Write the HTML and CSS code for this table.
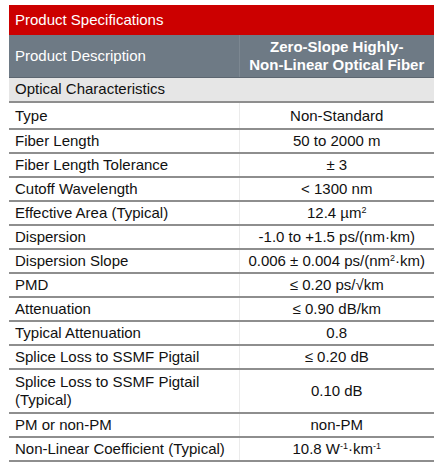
FILE: index.html
```html
<!DOCTYPE html>
<html lang="en">
<head>
  <meta charset="UTF-8" />
  <title>Product Specifications</title>
  <link rel="stylesheet" href="styles.css">
</head>
<body>
  <table class="spec">
    <tr class="title-row">
      <th colspan="2">Product Specifications</th>
    </tr>
    <tr class="desc-row">
      <td class="name">Product Description</td>
      <td class="value">Zero-Slope Highly-<br>Non-Linear Optical Fiber</td>
    </tr>
    <tr class="section-row">
      <td colspan="2">Optical Characteristics</td>
    </tr>
    <tr class="first">
      <td class="name">Type</td>
      <td class="value">Non-Standard</td>
    </tr>
    <tr>
      <td class="name">Fiber Length</td>
      <td class="value">50 to 2000 m</td>
    </tr>
    <tr>
      <td class="name">Fiber Length Tolerance</td>
      <td class="value">± 3</td>
    </tr>
    <tr>
      <td class="name">Cutoff Wavelength</td>
      <td class="value">&lt; 1300 nm</td>
    </tr>
    <tr>
      <td class="name">Effective Area (Typical)</td>
      <td class="value">12.4 µm<sup>2</sup></td>
    </tr>
    <tr>
      <td class="name">Dispersion</td>
      <td class="value">-1.0 to +1.5 ps/(nm·km)</td>
    </tr>
    <tr>
      <td class="name">Dispersion Slope</td>
      <td class="value">0.006 ± 0.004 ps/(nm<sup>2</sup>·km)</td>
    </tr>
    <tr>
      <td class="name">PMD</td>
      <td class="value">≤ 0.20 ps/√km</td>
    </tr>
    <tr>
      <td class="name">Attenuation</td>
      <td class="value">≤ 0.90 dB/km</td>
    </tr>
    <tr>
      <td class="name">Typical Attenuation</td>
      <td class="value">0.8</td>
    </tr>
    <tr>
      <td class="name">Splice Loss to SSMF Pigtail</td>
      <td class="value">≤ 0.20 dB</td>
    </tr>
    <tr class="tall">
      <td class="name">Splice Loss to SSMF Pigtail<br>(Typical)</td>
      <td class="value">0.10 dB</td>
    </tr>
    <tr>
      <td class="name">PM or non-PM</td>
      <td class="value">non-PM</td>
    </tr>
    <tr>
      <td class="name">Non-Linear Coefficient (Typical)</td>
      <td class="value">10.8 W<sup>-1</sup>·km<sup>-1</sup></td>
    </tr>
  </table>
</body>
</html>
```

FILE: styles.css
```css
* {
  margin: 0;
  padding: 0;
  box-sizing: border-box;
}

body {
  background: white;
  font-family: "Liberation Sans", Arial, sans-serif;
  font-size: 15px;
  color: #111;
}

.spec {
  margin: 5px 0 0 9px;
  width: 425px;
  border-collapse: collapse;
}

.spec td,
.spec th {
  padding: 0 6px;
  line-height: 18px;
  text-align: left;
  font-weight: normal;
}

.spec td {
  height: 24px;
  border-bottom: 2px solid #8e8e8e;
}

.spec .name {
  width: 230px;
}

.spec .value {
  text-align: center;
  border-left: 1px solid #ebebeb;
}

.title-row th {
  height: 30px;
  background: #cc0000;
  color: white;
  font-size: 15px;
}

.desc-row td {
  height: 42px;
  background: #6e7a85;
  color: white;
  font-size: 15px;
  border-bottom: 1px solid #5c6670;
}

.desc-row .value {
  font-weight: bold;
  border-left: 1px solid #7c8791;
}

.section-row td {
  height: 25px;
  background: #e6e6e6;
  font-size: 15px;
}

.first td {
  height: 27px;
}

.tall td {
  height: 44px;
}

sup {
  font-size: 9px;
  line-height: 0;
  vertical-align: 5px;
}
```
